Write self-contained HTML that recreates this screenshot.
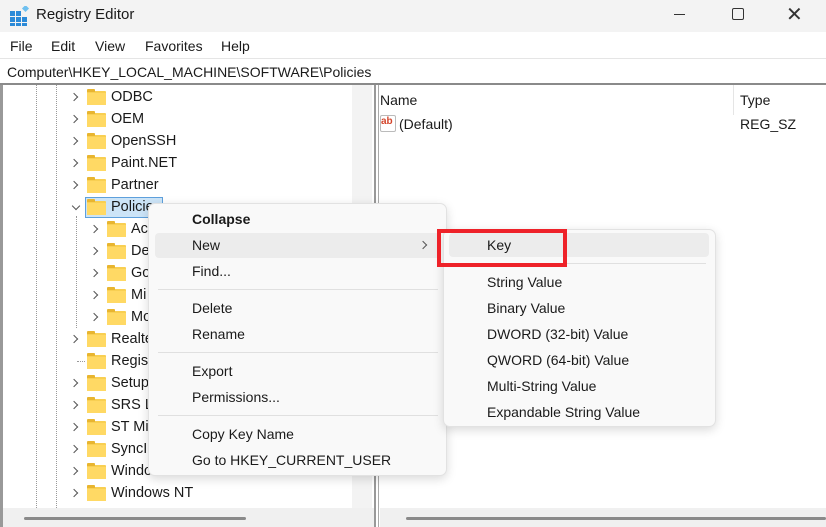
<!DOCTYPE html><html><head><style>
*{margin:0;padding:0;box-sizing:border-box}
body{width:826px;height:527px;overflow:hidden;background:#fff;font-family:"Liberation Sans",sans-serif;font-size:14px;color:#1a1a1a;position:relative}
.a{position:absolute;white-space:nowrap}
.f{position:absolute;width:19px;height:14px;background:#f8cf52;border-radius:1px}
.f:before{content:"";position:absolute;left:0;top:-2px;width:8px;height:3px;background:#e8b530;border-radius:1px 1px 0 0}
.f:after{content:"";position:absolute;left:0;top:2px;width:19px;height:12px;background:#ffd964}
.c{position:absolute;width:6px;height:6px;border-right:1.3px solid #555;border-top:1.3px solid #555;transform:rotate(45deg)}
.t{position:absolute;font-size:14.5px}
.m{position:absolute;font-size:14px}
.sep{position:absolute;height:1px;background:#e0e0e0}
</style></head><body>
<div class="a" style="left:0;top:0;width:826px;height:32px;background:#f3f3f3"></div>
<svg class="a" style="left:10px;top:6px" width="20" height="20"><g fill="#2b8ad8"><rect x="0" y="5" width="5" height="5"/><rect x="6" y="5" width="5" height="5"/><rect x="0" y="11" width="5" height="5"/><rect x="6" y="11" width="5" height="5"/><rect x="12" y="11" width="5" height="5"/><rect x="0" y="17" width="5" height="3"/><rect x="6" y="17" width="5" height="3"/><rect x="12" y="17" width="5" height="3"/></g><rect x="13" y="0" width="5" height="5" transform="rotate(45 15.5 2.5)" fill="#6ec0f0"/></svg>
<div class="a" style="left:36px;top:6px;font-size:15px">Registry Editor</div>
<div class="a" style="left:674px;top:14px;width:11px;height:1px;background:#333"></div>
<div class="a" style="left:732px;top:8px;width:12px;height:12px;border:1.2px solid #333;border-radius:2px"></div>
<div class="a" style="left:786px;top:2px;font-size:20px;color:#333">✕</div>
<div class="a" style="left:10px;top:38px">File</div>
<div class="a" style="left:51px;top:38px">Edit</div>
<div class="a" style="left:95px;top:38px">View</div>
<div class="a" style="left:145px;top:38px">Favorites</div>
<div class="a" style="left:221px;top:38px">Help</div>
<div class="a" style="left:0;top:58px;width:826px;height:26px;border-top:1px solid #e5e5e5"></div>
<div class="a" style="left:7px;top:64px">Computer\HKEY_LOCAL_MACHINE\SOFTWARE\Policies</div>
<div class="a" style="left:0;top:83px;width:826px;height:2px;background:#8a8a8a"></div>
<div class="a" style="left:0;top:85px;width:3px;height:442px;background:#999"></div>
<div class="a" style="left:352px;top:85px;width:20px;height:423px;background:#f3f3f3"></div>
<div class="a" style="left:374px;top:85px;width:2px;height:442px;background:#999"></div>
<div class="a" style="left:378px;top:85px;width:1px;height:442px;background:#aaa"></div>
<div class="a" style="left:3px;top:508px;width:371px;height:19px;background:#f0f0f0"></div>
<div class="a" style="left:24px;top:517px;width:222px;height:3px;background:#8a8a8a;border-radius:2px"></div>
<div class="a" style="left:380px;top:508px;width:446px;height:19px;background:#f0f0f0"></div>
<div class="a" style="left:406px;top:517px;width:420px;height:3px;background:#8a8a8a;border-radius:2px"></div>
<div class="a" style="left:36px;top:85px;height:423px;border-left:1px dotted #999"></div>
<div class="a" style="left:56px;top:85px;height:423px;border-left:1px dotted #999"></div>
<div class="a" style="left:76px;top:216px;height:112px;border-left:1px dotted #999"></div>
<div class="a" style="left:733px;top:85px;width:1px;height:30px;background:#e5e5e5"></div>
<div class="a" style="left:380px;top:92px">Name</div>
<div class="a" style="left:740px;top:92px">Type</div>
<div class="a" style="left:380px;top:115px;width:16px;height:17px;background:#fff;border:1px solid #bbb;border-radius:2px;font-size:10px;font-weight:bold;color:#d4452c;line-height:12px">ab</div>
<div class="a" style="left:399px;top:116px">(Default)</div>
<div class="a" style="left:740px;top:116px">REG_SZ</div>
<div class="a" style="left:85px;top:197px;width:78px;height:21px;background:#cce4f7;border:1px solid #5ea0dc"></div>
<div id="tree"></div>
<script>
var rows=[["ODBC",0],["OEM",0],["OpenSSH",0],["Paint.NET",0],["Partner",0],["Policies",0,1],["Ac",1],["De",1],["Go",1],["Mi",1],["Mo",1],["Realtek",0],["Registered",0,2],["Setup",0],["SRS Labs",0],["ST Micro",0],["SyncIntegration",0],["Windows",0],["Windows NT",0]];
var h="";rows.forEach(function(r,i){var y=97+i*22,ind=r[1]?20:0;
if(r[2]==1)h+='<div class="c" style="left:'+(73+ind)+'px;top:'+(y-4)+'px;transform:rotate(135deg)"></div>';
else if(r[2]!=2)h+='<div class="c" style="left:'+(71+ind)+'px;top:'+(y-3)+'px"></div>';
else h+='<div class="a" style="left:77px;top:'+y+'px;width:8px;border-top:1px dotted #999"></div>';
h+='<div class="f" style="left:'+(87+ind)+'px;top:'+(y-6)+'px"></div><div class="t" style="left:'+(111+ind)+'px;top:'+(y-8)+'px">'+r[0]+'</div>';});
document.getElementById("tree").outerHTML=h;
</script>
<div class="a" style="left:148px;top:203px;width:299px;height:273px;background:#f9f9f9;border:1px solid #e2e2e2;border-radius:7px;box-shadow:0 3px 10px rgba(0,0,0,.15)"></div>
<div class="a" style="left:155px;top:233px;width:285px;height:25px;background:#ececec;border-radius:4px"></div>
<div class="m" style="left:192px;top:211px;font-weight:bold">Collapse</div>
<div class="m" style="left:192px;top:237px">New</div>
<div class="c" style="left:420px;top:242px"></div>
<div class="m" style="left:192px;top:263px">Find...</div>
<div class="sep" style="left:158px;top:289px;width:280px"></div>
<div class="m" style="left:192px;top:300px">Delete</div>
<div class="m" style="left:192px;top:326px">Rename</div>
<div class="sep" style="left:158px;top:352px;width:280px"></div>
<div class="m" style="left:192px;top:363px">Export</div>
<div class="m" style="left:192px;top:389px">Permissions...</div>
<div class="sep" style="left:158px;top:415px;width:280px"></div>
<div class="m" style="left:192px;top:426px">Copy Key Name</div>
<div class="m" style="left:192px;top:452px">Go to HKEY_CURRENT_USER</div>
<div class="a" style="left:443px;top:229px;width:273px;height:198px;background:#f9f9f9;border:1px solid #e2e2e2;border-radius:7px;box-shadow:0 3px 10px rgba(0,0,0,.15)"></div>
<div class="a" style="left:449px;top:233px;width:260px;height:24px;background:#ececec;border-radius:4px"></div>
<div class="sep" style="left:452px;top:263px;width:254px"></div>
<div class="a" style="left:437px;top:229px;width:130px;height:38px;border:4px solid #ee2229"></div>
<div class="m" style="left:487px;top:237px">Key</div>
<div class="m" style="left:487px;top:274px">String Value</div>
<div class="m" style="left:487px;top:300px">Binary Value</div>
<div class="m" style="left:487px;top:326px">DWORD (32-bit) Value</div>
<div class="m" style="left:487px;top:352px">QWORD (64-bit) Value</div>
<div class="m" style="left:487px;top:378px">Multi-String Value</div>
<div class="m" style="left:487px;top:404px">Expandable String Value</div>
</body></html>
